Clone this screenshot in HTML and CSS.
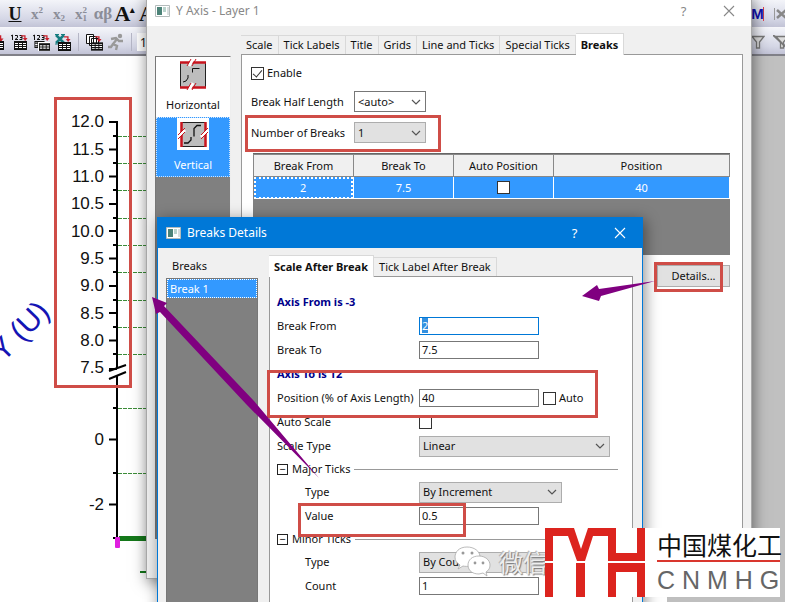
FILE: index.html
```
<!DOCTYPE html>
<html lang="en">
<head>
<meta charset="utf-8">
<title>Y Axis - Layer 1</title>
<link rel="stylesheet" href="styles.css">
</head>
<body>
<svg class="defs" aria-hidden="true">
  <symbol id="chevron" viewBox="0 0 10 6"><path d="M1 1l4 4 4-4" fill="none" stroke="#555" stroke-width="1.2"/></symbol>
  <symbol id="cross" viewBox="0 0 12 12"><path d="M1 1l10 10M11 1L1 11" fill="none" stroke="currentColor" stroke-width="1.1"/></symbol>
  <symbol id="app" viewBox="0 0 15 12"><path fill="#fff" stroke="#b4bcbc" d="M.5.5h14v11H.5z"/><path fill="#4c8378" d="M2 2h5v8H2z"/><path fill="#b9d3cc" d="M8 2h3v5H8z"/><path fill="#d9dfdf" d="M12 2h2v8h-2z"/></symbol>
  <symbol id="sheet" viewBox="0 0 13 9"><path fill="#111" d="M0 0h13v9H0z"/><path fill="#fff" d="M1 2h3v1H1zM5 2h3v1H5zM9 2h3v1H9zM1 4h3v1H1zM5 4h3v1H5zM9 4h3v1H9zM1 6h3v1H1zM5 6h3v1H5zM9 6h3v1H9z"/></symbol>
  <symbol id="redarrow" viewBox="0 0 8 7"><path d="M0 1h4.500v3" fill="none" stroke="#c8202c" stroke-width="1.500"/><path fill="#c8202c" d="M2 3.500h5.500L4.800 7z"/></symbol>
  <symbol id="funnel" viewBox="0 0 14 14"><path fill="#ddd" stroke="#777" stroke-width="1.300" d="M1 1.500h12L8.500 7v6h-3V7z"/></symbol>
</svg>
<main class="desktop">
  <div class="toolbar">
    <div class="tools">
      <button class="tool underline" aria-label="Underline">U</button>
      <button class="tool dim" aria-label="Superscript">x<sup>2</sup></button>
      <button class="tool dim" aria-label="Subscript">x<sub>2</sub></button>
      <button class="tool dim" aria-label="Super and subscript">x<span class="stack"><span>2</span><span>1</span></span></button>
      <button class="tool dim greek" aria-label="Greek">αβ</button>
      <button class="tool big" aria-label="Increase font">A<sup>▴</sup></button>
      <button class="tool big" aria-label="Decrease font">A</button>
    </div>
    <div class="tools trailing">
      <button class="tool mask" aria-label="Mask">M</button>
      <button class="tool" aria-label="Unmask"><svg width="14" height="12" viewBox="0 0 14 12"><path stroke="#999" d="M.5 0v12"/><path stroke="#888" stroke-width="2.500" d="M3 2l9 8M12 2L3 10"/></svg></button>
    </div>
  </div>
  <div class="toolbar second">
    <div class="tools imports">
      <button class="tool" aria-label="Import"><svg width="18" height="18" viewBox="0 0 18 18"><use href="#redarrow" x="8" y="2" width="8" height="7"/><use href="#sheet" x="3" y="8" width="13" height="9"/></svg></button>
      <button class="tool" aria-label="Import ASCII"><svg width="18" height="18" viewBox="0 0 18 18"><path d="M1 3l1.500-1v5M5 2.500h2.500v2L5 6.500h3M9.500 2.500H12v4H9.500M10 4.500h2" fill="none" stroke="#111"/><use href="#redarrow" x="11" y="2" width="7" height="6"/><use href="#sheet" x="4" y="8" width="13" height="9"/></svg></button>
      <button class="tool" aria-label="Import multiple ASCII"><svg width="18" height="18" viewBox="0 0 18 18"><path d="M1 3l1.500-1v5M5 2.500h2.500v2L5 6.500h3M9.500 2.500H12v4H9.500M10 4.500h2" fill="none" stroke="#111"/><use href="#redarrow" x="11" y="2" width="7" height="6"/><use href="#sheet" x="2" y="8" width="11" height="7"/><path d="M6 9h12v9H6z" fill="#fff"/><use href="#sheet" x="7" y="10" width="11" height="8"/></svg></button>
      <button class="tool" aria-label="Import Excel"><svg width="18" height="18" viewBox="0 0 18 18"><path d="M2 2l8 8M10 2l-8 8" stroke="#167c80" stroke-width="2.500"/><path d="M1 1.500h4M7 1.500h4M1 11h4" stroke="#167c80"/><use href="#redarrow" x="10" y="3" width="7" height="6"/><use href="#sheet" x="4" y="9" width="13" height="9"/></svg></button>
      <span class="divider"></span>
      <button class="tool" aria-label="Batch"><svg width="18" height="18" viewBox="0 0 18 18"><path d="M1.500 1.500h7v9h-7zM4.500 3.500h7v9h-7zM6.500 5.500h7v9h-7z" fill="#fff" stroke="#111"/><use href="#redarrow" x="10" y="3" width="7" height="6"/><use href="#sheet" x="6" y="9" width="12" height="9"/></svg></button>
      <button class="tool" aria-label="Run"><svg width="18" height="18" viewBox="0 0 18 18"><circle cx="13" cy="3" r="2.200" fill="#999"/><path d="M4 6l5-1 3 3h4M10 6l-4 5 4 2-1 4M6 11l-2 3H1" fill="none" stroke="#999" stroke-width="2.400"/></svg></button>
      <span class="divider"></span>
      <input class="zoom" aria-label="Zoom" value="100">
    </div>
    <div class="tools trailing">
      <button class="tool" aria-label="Filter"><svg width="14" height="14"><use href="#funnel"/></svg></button>
      <button class="tool" aria-label="Clear filter"><svg width="16" height="14" viewBox="0 0 16 14"><use href="#funnel" x="2" width="14" height="14"/><path d="M0 0l15 14" stroke="#777" stroke-width="2"/></svg></button>
    </div>
  </div>
  <div class="workspace">
    <div class="page">
      <svg class="graph" width="146" height="546" viewBox="0 56 146 546" role="img" aria-label="Y axis">
        <path d="M118 136.500h28M118 163.500h28M118 190.500h28M118 218.500h28M118 245.500h28M118 272.500h28M118 300.500h28M118 327.500h28M118 354.500h28M118 408.500h28M118 473.500h28" stroke="#3c8c38" stroke-dasharray="4 1"/>
        <path d="M117 121v247M117 376v162M109 122h8M109 149.500h8M109 176.500h8M109 204h8M109 231h8M109 258.500h8M109 286h8M109 313h8M109 340.500h8M109 369h8M109 439.500h8M109 504.500h8M113 136h4M113 163h4M113 190h4M113 218h4M113 245h4M113 272h4M113 300h4M113 327h4M113 354h4M113 408h4M113 473h4M113 538h4M109 371l17-6M109 379l17-7" fill="none" stroke="#000" stroke-width="2"/>
        <path d="M119 538.500h27" stroke="#14781a" stroke-width="5"/>
        <path d="M140 572h6" stroke="#14781a" stroke-width="2"/>
        <rect x="115" y="537" width="5" height="11" rx="1" fill="#e020e0"/>
        <g class="ticks" text-anchor="end">
          <text x="104" y="127">12.0</text><text x="104" y="155">11.5</text><text x="104" y="182">11.0</text><text x="104" y="209">10.5</text><text x="104" y="237">10.0</text><text x="104" y="264">9.5</text><text x="104" y="291">9.0</text><text x="104" y="319">8.5</text><text x="104" y="346">8.0</text><text x="104" y="373">7.5</text><text x="104" y="445">0</text><text x="104" y="510">-2</text>
        </g>
        <text class="axis-title" transform="translate(3 363) rotate(-46)">Y (U)</text>
      </svg>
    </div>
  </div>

  <section class="window axis-window">
    <header class="titlebar">
      <svg width="15" height="12"><use href="#app"/></svg>
      <h1>Y Axis - Layer 1</h1>
      <button aria-label="Help">?</button>
      <button aria-label="Close"><svg width="12" height="12"><use href="#cross"/></svg></button>
    </header>
    <div class="axis-body">
      <div class="directions">
        <button class="direction">
          <svg width="32" height="32" viewBox="0 0 32 32"><path fill="#bdbdbd" stroke="#222" d="M3.500 4.500h25v25h-25z"/><path stroke="#c8141e" stroke-width="2.500" d="M3 4.500h26M3 29.500h26"/><path d="M15.500 10.500h7M15.500 10.500v4M6 24l3-1 2-3v-3" fill="none" stroke="#111"/><path stroke="#fff" stroke-width="3" d="M12 8l4-7M12 32l4-7"/><path stroke="#c8141e" d="M10 8l4-7M15 8l4-7M10 32l4-7M15 32l4-7"/></svg>
          <span>Horizontal</span>
        </button>
        <button class="direction selected">
          <svg width="32" height="32" viewBox="0 0 32 32"><path fill="#fff" d="M0 0h32v32H0z"/><path fill="#bdbdbd" stroke="#222" d="M4.500 4.500h24v24h-24z"/><path stroke="#c8141e" stroke-width="2.500" d="M4.500 4v25M28.500 4v25"/><path d="M24 7.500h-4l-3 3v8M14 19v3l-3 3H7" fill="none" stroke="#111" stroke-width="1.300"/><path stroke="#fff" stroke-width="3" d="M1 19l7-7M24 19l7-7"/><path stroke="#c8141e" d="M1 17l7-7M1 21l7-7M24 17l7-7M24 21l7-7"/></svg>
          <span>Vertical</span>
        </button>
      </div>
      <div class="tabbed">
        <div class="tabs" role="tablist">
          <button role="tab">Scale</button><button role="tab">Tick Labels</button><button role="tab">Title</button><button role="tab">Grids</button><button role="tab">Line and Ticks</button><button role="tab">Special Ticks</button><button role="tab" class="active" aria-selected="true">Breaks</button>
        </div>
        <div class="panel breaks-panel">
          <label class="check"><input type="checkbox" checked>Enable</label>
          <div class="option"><label for="half">Break Half Length</label><span class="select plain"><select id="half"><option>&lt;auto&gt;</option></select><svg width="10" height="6"><use href="#chevron"/></svg></span></div>
          <div class="option"><label for="num">Number of Breaks</label><span class="select"><select id="num"><option>1</option></select><svg width="10" height="6"><use href="#chevron"/></svg></span></div>
          <div class="table-box">
            <table>
              <thead><tr><th>Break From</th><th>Break To</th><th>Auto Position</th><th class="wide">Position</th></tr></thead>
              <tbody><tr><td class="current">2</td><td>7.5</td><td><input type="checkbox" aria-label="Auto Position"></td><td>40</td></tr></tbody>
            </table>
          </div>
          <button class="details">Details...</button>
        </div>
      </div>
    </div>
  </section>

  <section class="window details-window">
    <header class="titlebar">
      <svg width="15" height="12"><use href="#app"/></svg>
      <h2>Breaks Details</h2>
      <button aria-label="Help">?</button>
      <button aria-label="Close"><svg width="12" height="12"><use href="#cross"/></svg></button>
    </header>
    <div class="details-body">
      <div class="break-side">
        <div class="side-title">Breaks</div>
        <div class="break-list"><button>Break 1</button></div>
      </div>
      <div class="tabbed">
        <div class="tabs" role="tablist">
          <button role="tab" class="active" aria-selected="true">Scale After Break</button><button role="tab">Tick Label After Break</button>
        </div>
        <form class="panel form">
          <div class="row note">Axis From is -3</div>
          <div class="row"><label for="from">Break From</label><span class="focus-field"><input id="from" type="text" value="2"></span></div>
          <div class="row"><label for="to">Break To</label><input id="to" type="text" value="7.5"></div>
          <div class="row note">Axis To is 12</div>
          <div class="row"><label for="pos">Position (% of Axis Length)</label><input id="pos" type="text" value="40"><label class="check"><input type="checkbox">Auto</label></div>
          <div class="row"><label for="autoscale">Auto Scale</label><input id="autoscale" type="checkbox"></div>
          <div class="row"><label for="scale">Scale Type</label><span class="select long"><select id="scale"><option>Linear</option></select><svg width="10" height="6"><use href="#chevron"/></svg></span></div>
          <div class="group"><button type="button" aria-label="Collapse">−</button>Major Ticks</div>
          <div class="row sub"><label for="major">Type</label><span class="select medium"><select id="major"><option>By Increment</option></select><svg width="10" height="6"><use href="#chevron"/></svg></span></div>
          <div class="row sub"><label for="value">Value</label><input id="value" type="text" value="0.5"></div>
          <div class="group"><button type="button" aria-label="Collapse">−</button>Minor Ticks</div>
          <div class="row sub"><label for="minor">Type</label><span class="select medium"><select id="minor"><option>By Counts</option></select><svg width="10" height="6"><use href="#chevron"/></svg></span></div>
          <div class="row sub"><label for="count">Count</label><input id="count" type="text" value="1"></div>
        </form>
      </div>
    </div>
  </section>

  <svg class="marks" width="785" height="602" viewBox="0 0 785 602" aria-hidden="true">
    <g fill="none" stroke="#cf4d47" stroke-width="3">
      <path d="M55.500 98.500h75v288h-75zM246.500 116.500h193v34h-193zM655.500 263.500h66v27h-66zM268.500 371.500h328v45h-328zM299.500 504.500h165v31h-165z"/>
    </g>
    <path fill="#800080" d="M582 296l15-11 2 4 56-8-54 15-2 5zM152 297l15 6-3 3L254 401 319 478 246 404 160 312l-4 2z"/>
  </svg>

  <div class="watermark">
    <svg width="38" height="32" viewBox="0 0 38 32"><g fill="#fff" stroke="#aaa" stroke-width=".8"><path d="M13 1C5 1 1 6 1 11c0 4 2 6 5 8l-2 4 5-3c2 .5 5 .5 7 0 7-1 10-5 10-9C26 5 20 1 13 1z"/><path d="M25 10c-7 0-11 4-11 9 0 6 5 9 11 9l4-1 4 3-1-4c3-2 4-4 4-7 0-5-5-9-11-9z"/></g><g fill="#999"><circle cx="9" cy="7" r="1.500"/><circle cx="18" cy="7" r="1.500"/><circle cx="21" cy="17" r="1.400"/><circle cx="29" cy="17" r="1.400"/></g></svg>
    <span>微信</span>
  </div>
  <div class="brand">
    <svg width="100" height="69" viewBox="0 0 100 69" role="img" aria-label="MYH"><path fill="#dc241e" d="M0 0h29l7 21 7-21h28v25h21V0h8v33H63V8H48l-8 25h-8L23 8H8v25H0zM0 35h8v34H0zM31 35h9v34h-9zM63 35h37v34h-8V44H71v25h-8z"/></svg>
    <div class="brand-text"><div class="cn">中国煤化工</div><div class="latin">C N M H G</div></div>
  </div>
</main>
<script src="script.js"></script>
</body>
</html>
```
FILE: script.js
```
const first = document.getElementById("from");
first.focus();
first.select();
```
FILE: styles.css
```
* { box-sizing: border-box; }
body { margin: 0; font: 11px/14px "Noto Sans", "Noto Sans CJK SC", sans-serif; color: #111; }
button, input, select { font: inherit; color: inherit; margin: 0; padding: 0; border: 0; background: none; border-radius: 0; }
svg { display: block; flex: none; }
.defs { position: absolute; width: 0; height: 0; }
.desktop { position: relative; height: 100vh; overflow: hidden; display: flex; flex-direction: column; background: #c0c0c0; }

.toolbar { display: flex; justify-content: space-between; height: 28px; padding: 0 0 0 5px; background: linear-gradient(#f3f4f9, #d5d7e6 70%, #c2c3d6); border-bottom: 1px solid #f6f6fa; }
.toolbar.second { border-bottom: 2px solid #808088; }
.tools { display: flex; align-items: center; gap: 2px; height: 28px; }
.trailing { margin-right: -6px; gap: 3px; }
.tool { display: flex; align-items: center; justify-content: center; flex: none; width: 20px; height: 24px; font: bold 15px/20px "Liberation Serif", serif; }
.tool sup, .tool sub { font-size: 9px; line-height: 9px; }
.tool sup { margin-bottom: 8px; }
.tool sub { margin-top: 8px; }
.dim { color: #8b8d98; }
.stack { display: flex; flex-direction: column; font-size: 9px; line-height: 8px; }
.underline { font-size: 18px; text-decoration: underline; color: #111; }
.greek { font-size: 17px; }
.big { font-size: 22px; color: #111; }
.mask { width: 13px; height: 14px; margin-right: 4px; border: solid #e04050; border-width: 0 1px; color: #1010b0; font: bold 15px/14px "Liberation Sans", sans-serif; }
.imports { margin-left: -18px; gap: 2px; }
.divider { width: 1px; height: 18px; margin: 0 3px; background: #b5b6c6; }
.zoom { width: 60px; height: 18px; padding-left: 3px; background: #fff; font-size: 12px; }

.workspace { flex: 1; display: flex; min-height: 0; }
.page { width: 85%; background: #fff; }
.ticks { font: 17px "Liberation Sans", sans-serif; fill: #111; }
.axis-title { font: 30px "Liberation Sans", sans-serif; fill: #1414b4; }

.window { position: absolute; display: flex; flex-direction: column; background: #f0f0f0; }
.axis-window { left: 146px; top: -5px; width: 606px; height: 584px; border: solid #aaa; border-width: 0 1px 1px; box-shadow: 1px 3px 14px rgba(0,0,0,.5); }
.details-window { left: 157px; top: 217px; width: 486px; height: 420px; border: 1px solid #0078d7; box-shadow: 2px 3px 14px rgba(0,0,0,.45); }
.titlebar { display: flex; align-items: center; height: 31px; padding-left: 8px; background: #fff; color: #888; flex: none; }
.titlebar h1, .titlebar h2 { flex: 1; margin: 0 0 0 6px; font: 12px/16px "Noto Sans", sans-serif; }
.titlebar button { display: flex; justify-content: center; align-items: center; width: 45px; height: 30px; font-size: 13px; }
.details-window .titlebar { height: 30px; background: #0078d7; color: #fff; }

.axis-body { flex: 1; display: flex; gap: 10px; padding: 7px 8px 39px; }
.directions { width: 76px; margin-top: 23px; display: flex; flex-direction: column; background: #808080; border: 1px solid #777; border-right-color: #eee; }
.direction { display: flex; flex-direction: column; align-items: center; gap: 8px; height: 60px; background: #fff; padding-top: 1px; }
.direction.selected { background: #3399ff; color: #fff; outline: 1px dotted #cfe6ff; outline-offset: -1px; }
.tabbed { flex: 1; display: flex; flex-direction: column; min-width: 0; }
.tabs { display: flex; align-items: flex-end; height: 21px; }
.tabs button { height: 19px; padding: 0 5px; border: solid #d9d9d9; border-width: 1px 1px 0 0; white-space: nowrap; }
.tabs .active { height: 22px; margin-bottom: -1px; background: #fff; font-weight: bold; position: relative; }
.panel { flex: 1; background: #fff; border: 1px solid #999; }

.breaks-panel { display: flex; flex-direction: column; gap: 10px; padding: 11px 12px 0 9px; }
.check { display: flex; align-items: center; gap: 3px; height: 14px; }
input[type="checkbox"] { appearance: none; width: 13px; height: 13px; border: 1px solid #333; background: #fff; display: block; }
input[type="checkbox"]:checked { position: relative; }
input[type="checkbox"]:checked::after { content: ""; position: absolute; left: 3px; top: 0; width: 4px; height: 8px; border: solid #333; border-width: 0 1px 1px 0; transform: rotate(40deg); }
.option { display: flex; align-items: center; height: 21px; }
.breaks-panel .check + .option { margin-top: 1px; }
.option label { width: 103px; }
.select { position: relative; display: flex; align-items: center; width: 72px; height: 21px; border: 1px solid #adadad; background: #e1e1e1; }
.select.plain { background: #fff; border-color: #777; }
.select select { appearance: none; width: 100%; height: 100%; padding-left: 3px; outline: 0; }
.select svg { position: absolute; right: 4px; }
.select.long { width: 191px; }
.select.medium { width: 143px; }
.table-box { height: 102px; margin-left: 2px; background: #808080; border-top: 1px solid #666; }
table { width: 100%; border-collapse: collapse; table-layout: fixed; }
th { height: 22px; padding: 0; background: #f0f0f0; border: 1px solid #888; font-weight: normal; }
td { height: 22px; padding: 0; background: #3399ff; border-right: 1px solid #fff; border-bottom: 1px solid #fff; color: #fff; text-align: center; }
td input { margin: 0 auto; }
.current { outline: 2px dotted #fff; outline-offset: -2px; }
.wide { width: 37%; }
.details { align-self: flex-end; width: 73px; height: 22px; background: #e1e1e1; border: 1px solid #adadad; }

.details-body { flex: 1; display: flex; gap: 11px; padding: 7px 9px 0 8px; }
.break-side { width: 92px; display: flex; flex-direction: column; }
.side-title { height: 23px; padding: 4px 0 0 6px; }
.break-list { flex: 1; background: #808080; border: 1px solid #777; }
.break-list button { width: 100%; height: 19px; padding-left: 2px; text-align: left; background: #3399ff; color: #fff; border: 1px dotted #fff; }
.form { padding: 13px 14px 0 7px; }
.row { display: flex; align-items: center; height: 24px; }
.row > label:first-child { width: 142px; white-space: nowrap; }
.row.sub { padding-left: 28px; }
.row.sub > label:first-child { width: 114px; }
.row input[type="text"] { width: 120px; height: 18px; padding: 0 0 2px 2px; border: 1px solid #777; background: #fff; outline: 0; }
.row input::selection { background: #3390e0; color: #fff; }
.row .check { margin-left: 4px; }
.note { font-weight: bold; color: #00008b; }
.row .focus-field input { border-color: #0078d7; display: block; }
.group { display: flex; align-items: center; gap: 4px; height: 22px; }
.group::after { content: ""; flex: 1; height: 1px; background: #999; }
.group button { width: 11px; height: 11px; border: 1px solid #222; line-height: 8px; }

.marks { position: absolute; left: 0; top: 0; }
.watermark { position: absolute; left: 454px; top: 546px; display: flex; align-items: center; gap: 7px; color: #eee; font: 24px/32px "Noto Sans CJK SC", sans-serif; text-shadow: 1px 1px 1px #777, -1px -1px 0 #bbb; }
.brand { position: absolute; left: 545px; top: 528px; display: flex; gap: 12px; width: 235px; height: 69px; background: #fff; }
.brand-text { width: 123px; white-space: nowrap; }
.cn { height: 34px; border-bottom: 2px solid #d9362e; font: 25px/32px "Noto Sans CJK SC", sans-serif; }
.latin { font: 25px/36px "Liberation Sans", sans-serif; color: #666; }
```
